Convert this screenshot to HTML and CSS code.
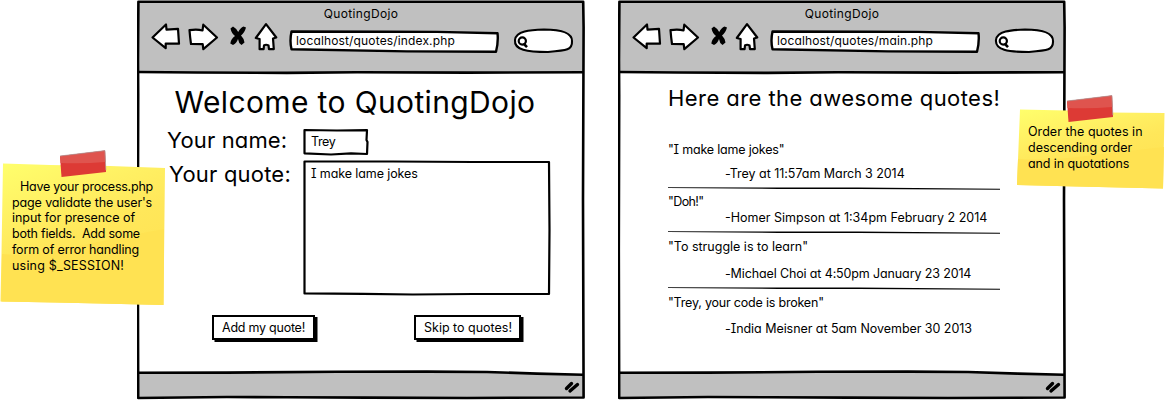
FILE: index.html
```html
<!DOCTYPE html>
<html lang="en">
<head>
<meta charset="utf-8">
<title>QuotingDojo wireframe</title>
<link rel="stylesheet" href="styles.css">
</head>
<body>
<svg width="0" height="0" class="defs" aria-hidden="true">
  <defs>
    <linearGradient id="paper" x1="0" y1="0" x2="0.45" y2="1">
      <stop offset="0" stop-color="#ffff6c"/>
      <stop offset="0.35" stop-color="#fff063"/>
      <stop offset="0.6" stop-color="#ffe75a"/>
      <stop offset="1" stop-color="#ffe252"/>
    </linearGradient>
    <symbol id="frame" viewBox="0 0 448 400">
      <path fill="#fff" d="M1 2H446V398H1z"/>
      <path fill="#c0c0c0" d="M1 2H446V72.5H1z"/>
      <path fill="#c0c0c0" d="M1 373L140 372L230 371.3H300L446 375V398H1z"/>
      <g fill="none" stroke="#000" stroke-width="2.6" stroke-linejoin="round">
        <path d="M1.4 1.8H446.2L446.6 27L446 200L446.6 397.5L330 398L230 397.6L150 397.2L90 397L1.2 398L.8 250L1.2 95L1 60Z"/>
        <path d="M1 72L60 72.5L150 72.9L220 72.3L330 72.6L446 72.2"/>
        <path d="M1 372.8L90 372.6L200 371.8L290 371.6L350 372L400 373.6L446 374.8"/>
      </g>
      <path fill="none" stroke="#000" stroke-width="3.4" stroke-linecap="round" d="M429.5 388.5L434.5 383.5M433 391L440.5 384.5"/>
    </symbol>
    <symbol id="back" viewBox="13 22 32 30">
      <path fill="#fff" stroke="#000" stroke-width="2.2" stroke-linejoin="round" d="M15.5 37.5L29 24.5L29.5 29.6L41 28.8L42 43.7L28.7 43.5V48.2z"/>
    </symbol>
    <symbol id="forward" viewBox="50 22 32 30">
      <path fill="#fff" stroke="#000" stroke-width="2.2" stroke-linejoin="round" d="M52.500 30.2Q60 29 65.500 30.5L66.300 24.7L80 37.5L66.3 49.2L65.7 44.2L54 44Q53 37 52.500 30.2z"/>
    </symbol>
    <symbol id="stop" viewBox="90 22 22 30">
      <path fill="#000" d="M93.500 28.5L96 26.500Q99.500 28.500 101.200 32Q103.500 27.500 106.500 26.500L109 27.500Q107.500 33 104 35.500Q107 38.500 107.500 42.500L104.500 45Q101.500 43 101 39Q99.500 43.500 96 45L93.300 43.500Q94 38.500 98 36Q94.500 33.500 93.500 28.500z"/>
    </symbol>
    <symbol id="home" viewBox="116 22 26 30">
      <path fill="#fff" stroke="#000" stroke-width="2.2" stroke-linejoin="round" d="M129 24.2L139.300 37.500L136 38.500L136.800 49.200H132L131.500 45.500Q129 44 127 45.500L126.600 49.200H122.600V39L118.800 38z"/>
    </symbol>
    <symbol id="address" viewBox="152 28 212 27">
      <path fill="#fff" stroke="#000" stroke-width="2.4" stroke-linejoin="round" d="M154.500 31.500L250 31.700L300 31.900L360.500 33.200Q361.500 42 359 51.800L270 51.400L154.500 49.200Q152.500 41 154.500 31.500z"/>
    </symbol>
    <symbol id="search" viewBox="375 28 63 27">
      <path fill="#fff" stroke="#000" stroke-width="2.100" d="M378 40C379 31 393 30 407 29.500C424 29.500 435 33 435 41C435.500 50 430 50.500 411 52C390 52 377 50 378 40z"/>
      <circle cx="385.300" cy="41" r="3.600" fill="none" stroke="#000" stroke-width="2.2"/>
      <path d="M386.500 43.500L390 47.200" stroke="#000" stroke-width="2.600"/>
    </symbol>
    <symbol id="rule" viewBox="0 0 332 3">
      <path fill="#000" d="M0 .3L110 .5L190 .4L332 1.700V2.800L190 2L110 1.900L0 .9z"/>
    </symbol>
    <symbol id="tape" viewBox="0 0 48 28">
      <path fill="#dd3a35" d="M1 6L46 0.500L47 22L2.500 27z"/>
      <path fill="#df544e" d="M1 6L46 0.500L46.500 12Q24 14 1.500 13z"/>
      <path fill="none" stroke="#a99" stroke-width=".7" d="M1 6L46 .6L46.800 20"/>
    </symbol>
  </defs>
</svg>

<main class="board">
  <section class="window">
    <svg class="frame"><use href="#frame"/></svg>
    <header class="chrome">
      <div class="title">QuotingDojo</div>
      <nav class="toolbar">
        <svg class="back"><use href="#back"/></svg>
        <svg class="forward"><use href="#forward"/></svg>
        <svg class="stop"><use href="#stop"/></svg>
        <svg class="home"><use href="#home"/></svg>
        <div class="address"><svg class="outline"><use href="#address"/></svg><span>localhost/quotes/index.php</span></div>
        <svg class="search"><use href="#search"/></svg>
      </nav>
    </header>
    <div class="form-page">
      <h1 class="welcome">Welcome to QuotingDojo</h1>
      <div class="form">
        <label class="label-name">Your name:</label>
        <div class="field name-field">
          <svg class="outline" viewBox="0 0 66 28"><path d="M1.500 2L34 2.500L64 2.200L63.500 12L64.500 14L64 26L48 25.400L28 26.500L1.500 25.300z"/></svg>
          <span class="typed-name">Trey</span>
        </div>
        <label class="label-quote">Your quote:</label>
        <div class="field quote-field">
          <svg class="outline" viewBox="0 0 248 136"><path d="M1.500 1.500L90 1.500L170 2L246 2L246.500 70L246 134L170 134L110 134.500L60 133.800L1.500 133.400z"/></svg>
          <span class="typed-quote">I make lame jokes</span>
        </div>
      </div>
      <div class="actions">
        <div class="button add"><span>Add my quote!</span></div>
        <div class="button skip"><span>Skip to quotes!</span></div>
      </div>
    </div>
  </section>

  <section class="window">
    <svg class="frame"><use href="#frame"/></svg>
    <header class="chrome">
      <div class="title">QuotingDojo</div>
      <nav class="toolbar">
        <svg class="back"><use href="#back"/></svg>
        <svg class="forward"><use href="#forward"/></svg>
        <svg class="stop"><use href="#stop"/></svg>
        <svg class="home"><use href="#home"/></svg>
        <div class="address"><svg class="outline"><use href="#address"/></svg><span>localhost/quotes/main.php</span></div>
        <svg class="search"><use href="#search"/></svg>
      </nav>
    </header>
    <div class="quotes-page">
      <h2 class="heading">Here are the awesome quotes!</h2>
      <article class="quote q1"><p>"I make lame jokes"</p><p class="by">-Trey at 11:57am March 3 2014</p></article>
      <svg class="rule"><use href="#rule"/></svg>
      <article class="quote q2"><p>"Doh!"</p><p class="by">-Homer Simpson at 1:34pm February 2 2014</p></article>
      <svg class="rule"><use href="#rule"/></svg>
      <article class="quote q3"><p>"To struggle is to learn"</p><p class="by">-Michael Choi at 4:50pm January 23 2014</p></article>
      <svg class="rule"><use href="#rule"/></svg>
      <article class="quote q4"><p>"Trey, your code is broken"</p><p class="by">-India Meisner at 5am November 30 2013</p></article>
    </div>
  </section>

  <aside class="note note-left">
    <svg class="paper" viewBox="0 0 165 142"><path fill="url(#paper)" d="M3 .5L50 2L110 3L165 5L163.500 142L100 140.500L55 139.500L.5 138.500L1.500 90z"/><path fill="#ffe252" d="M2 91Q30 94 70 85T164 66L163.500 142L100 140.500L55 139.500L1.500 138.500z"/></svg>
    <svg class="tape"><use href="#tape"/></svg>
    <p class="n1">Have your process.php</p>
    <p class="n2">page validate the user's</p>
    <p class="n3">input for presence of</p>
    <p class="n4">both fields.&nbsp; Add some</p>
    <p class="n5">form of error handling</p>
    <p class="n6">using $_SESSION!</p>
  </aside>

  <aside class="note note-right">
    <svg class="paper" viewBox="0 0 148 80"><path fill="url(#paper)" d="M3 .5L50 1.500L90 3.500L147.500 4L146 79.500L60 77.500L0 76z"/><path fill="#ffe252" d="M1 50Q30 52 70 47T147 38L146 79.500L60 77.500L0 76z"/></svg>
    <svg class="tape"><use href="#tape"/></svg>
    <p class="n7">Order the quotes in</p>
    <p class="n8">descending order</p>
    <p class="n9">and in quotations</p>
  </aside>
</main>
</body>
</html>
```
FILE: styles.css
```css
* { box-sizing: border-box; margin: 0; padding: 0; }
body {
  width: 1165px;
  height: 400px;
  overflow: hidden;
  background: #fff;
  color: #000;
  font: 12.5px/16px Inter, "Liberation Sans", sans-serif;
  font-feature-settings: "cv11", "cv08";
}
svg { display: block; }
.defs { position: absolute; }
.board { position: relative; display: flex; gap: 33px; padding-left: 137px; height: 400px; }

.window { position: relative; width: 448px; height: 400px; flex: none; }
.frame { position: absolute; inset: 0; width: 448px; height: 400px; }
.chrome { position: relative; height: 74px; padding-top: 5px; }
.title { text-align: center; font-size: 12px; letter-spacing: .33px; line-height: 17px; }
.toolbar { display: flex; padding-left: 13px; }
.toolbar svg { flex: none; }
.back { width: 32px; height: 30px; }
.forward { width: 32px; height: 30px; margin-left: 5px; }
.stop { width: 22px; height: 30px; margin-left: 8px; }
.home { width: 26px; height: 30px; margin-left: 4px; }
.address { position: relative; width: 212px; height: 27px; margin: 6px 0 0 10px; padding: 4px 0 0 7px; font-size: 12px; letter-spacing: .15px; line-height: 18px; }
.address span { position: relative; }
.outline { position: absolute; inset: 0; width: 100%; height: 100%; }
.search { width: 63px; height: 27px; margin: 6px 0 0 11px; }

.form-page { position: relative; padding: 10px 0 0 30px; }
.welcome { padding-left: 7.5px; font-size: 30px; line-height: 36px; font-weight: 400; letter-spacing: .37px; white-space: nowrap; }
.form { display: grid; grid-template-columns: 136px 248px; grid-template-rows: 28px 136px; row-gap: 4px; margin-top: 8px; }
.form label { font-size: 22px; line-height: 28px; white-space: nowrap; }
.label-name { margin-top: -2px; letter-spacing: .15px; }
.label-quote { padding-left: 2px; letter-spacing: .2px; }
.field { position: relative; padding-left: 8px; }
.field .outline { fill: #fff; stroke: #000; stroke-width: 2.2px; stroke-linejoin: round; }
.field span { position: relative; display: block; }
.name-field { width: 66px; padding-top: 6px; }
.quote-field { padding-top: 6px; }
.typed-name { letter-spacing: -.4px; }
.typed-quote { letter-spacing: -.1px; }
.actions { display: flex; padding-left: 45px; gap: 99px; margin-top: 19px; }
.button { height: 25px; border: 2px solid #000; background: #fff; box-shadow: 2.5px 2px 0 #000; padding: 2px 0 0 8px; line-height: 17px; white-space: nowrap; }
.add { width: 103px; letter-spacing: -.24px; }
.skip { width: 107px; }

.quotes-page { position: relative; padding: 10px 0 0 50px; }
.heading { font-size: 22px; line-height: 28px; font-weight: 400; letter-spacing: .43px; white-space: nowrap; }
.rule { width: 332px; height: 3px; }
.quote p { white-space: nowrap; }
.quote .by { padding-left: 57px; }
.q1 { margin: 30px 0 5px; letter-spacing: -.2px; }
.q1 .by { margin-top: 8px; letter-spacing: -.04px; }
.q2 { margin: 4px 0 5px; }
.q2 p:first-child { letter-spacing: -.6px; }
.q3 { margin: 5px 0 5px; }
.q3 .by { margin-top: 11px; letter-spacing: -.13px; }
.q4 { margin-top: 5px; letter-spacing: -.2px; }
.q4 .by { margin-top: 10px; letter-spacing: -.05px; }

/* Sticky notes taped over the window edges */
.note { position: absolute; line-height: 15.7px; white-space: nowrap; }
.note p { position: relative; }
.note .paper { position: absolute; inset: 0; width: 100%; height: 100%; }
.note .tape { position: absolute; width: 48px; height: 28px; }
.note-left { left: 0; top: 163px; width: 165px; height: 142px; padding: 16px 0 0 12px; }
.note-left .tape { left: 59px; top: -13px; }
.note-right { left: 1017px; top: 109px; width: 148px; height: 80px; padding: 15px 0 0 11px; line-height: 16px; }
.note-right .tape { left: 49px; top: -14px; }
.n1 { padding-left: 8px; letter-spacing: -.24px; }
.n2 { letter-spacing: -.12px; }
.n3 { letter-spacing: -.04px; }
.n4 { letter-spacing: -.22px; }
.n5 { letter-spacing: -.15px; }
.n6 { letter-spacing: .2px; }
.n7 { letter-spacing: .04px; }
.n9 { letter-spacing: -.1px; }
```
